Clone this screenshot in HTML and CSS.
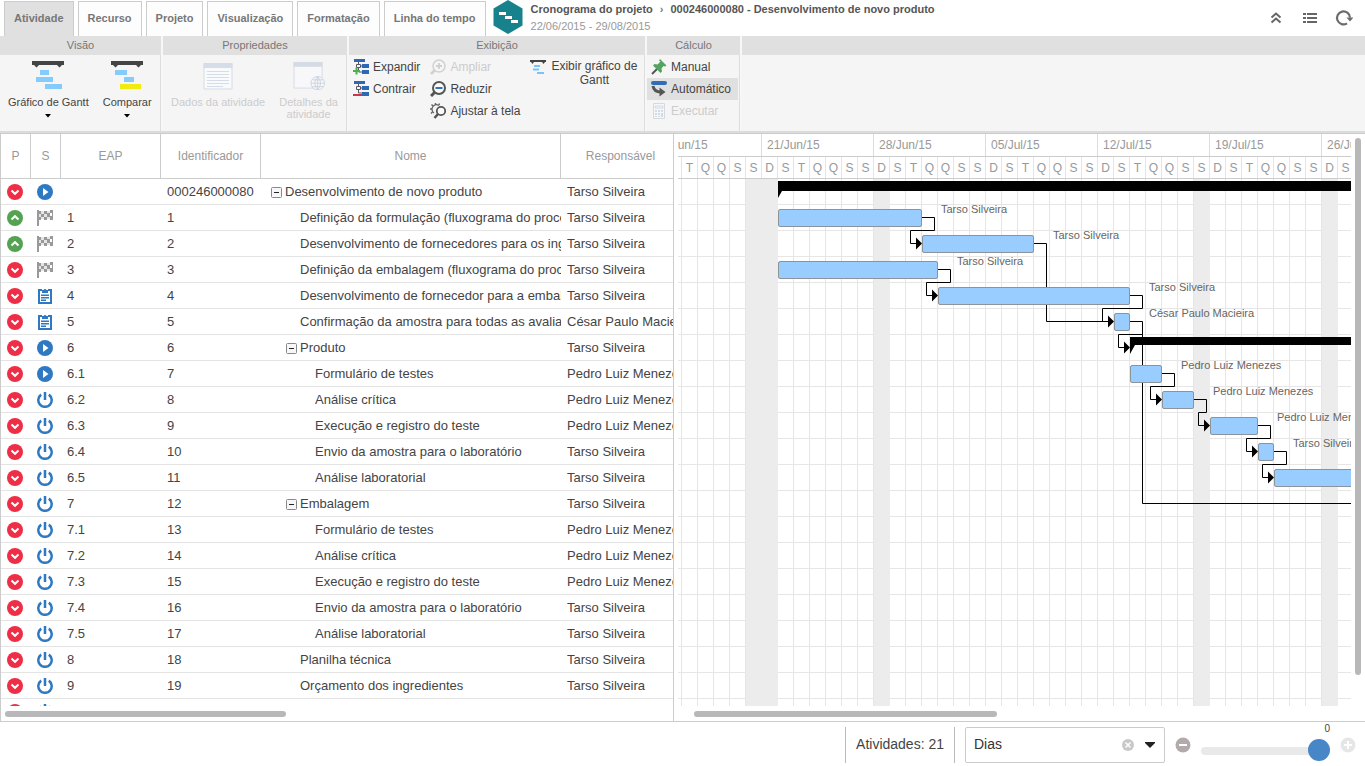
FILE: index.html
```html
<!DOCTYPE html>
<html lang="pt-BR">
<head>
<meta charset="utf-8">
<title>Cronograma do projeto</title>
<link rel="stylesheet" href="styles.css">
</head>
<body>
<svg class="sprite" aria-hidden="true">
  <symbol id="down" viewBox="0 0 16 16"><circle cx="8" cy="8" r="8" fill="#ee2e46"/><path d="M4.500 6.500 8 9.800l3.500-3.300" fill="none" stroke="#fff" stroke-width="2"/></symbol>
  <symbol id="up" viewBox="0 0 16 16"><circle cx="8" cy="8" r="8" fill="#55a352"/><path d="M4.500 9.500 8 6.200l3.500 3.300" fill="none" stroke="#fff" stroke-width="2"/></symbol>
  <symbol id="play" viewBox="0 0 16 16"><circle cx="8" cy="8" r="8" fill="#2f79c3"/><path d="M6 4v8L11.500 8z" fill="#fff"/></symbol>
  <symbol id="power" viewBox="0 0 16 16"><path d="M4.200 2.600a6.700 6.700 0 1 0 7.600 0M8 0v8" fill="none" stroke="#2f79c3" stroke-width="2.500"/></symbol>
  <symbol id="flag" viewBox="0 0 17 16"><path d="M0 0h2v16H0zM2 1h2v3H2zM7 1h3v3H7zM13 0h3v3h-3zM4 4h3v3H4zM10 3h3v4h-3zM15 3h1v3h-1zM2 7h2v3H2zM7 7h3v3H7zM13 6h3v4h-3z" fill="#999"/><path d="M4 1h3v3H4zM10 1h3v2h-3zM2 4h2v3H2zM7 4h3v3H7zM4 7h3v2H4zM10 7h3v2h-3z" fill="#999" opacity=".25"/></symbol>
  <symbol id="clip" viewBox="0 0 16 16"><path d="M1 1h4v2H3v11h10V3h-2V1h4v15H1zM5 2h1.500a1.600 1.600 0 0 1 3 0H11v3H5zM4 6.500h8V8H4zM4 9h8v1.500H4zM4 11.500h5V13H4z" fill="#2f79c3"/></symbol>
  <symbol id="minus" viewBox="0 0 11 11"><rect x=".5" y=".5" width="10" height="10" rx="1" fill="#f7f7f7" stroke="#888"/><path d="M3 5.500h5" stroke="#222"/></symbol>
  <symbol id="caret" viewBox="0 0 6 4"><path d="M0 0h6L3 3.500z" fill="#000"/></symbol>
</svg>

<header class="topbar">
  <nav class="tabs">
    <button class="tab tab-active">Atividade</button>
    <button class="tab">Recurso</button>
    <button class="tab">Projeto</button>
    <button class="tab">Visualização</button>
    <button class="tab">Formatação</button>
    <button class="tab">Linha do tempo</button>
  </nav>
  <svg class="hex" viewBox="0 0 30 34"><path d="M15 0 29.500 8.500v17L15 34 .5 25.500v-17z" fill="#18828c"/><path d="M6 12h7v3H6zM12 16h7v3h-7zM18 20h7v3h-7z" fill="#fff"/></svg>
  <div class="title">
    <h1><span>Cronograma do projeto</span><i>›</i><span>000246000080 - Desenvolvimento de novo produto</span></h1>
    <p>22/06/2015 - 29/08/2015</p>
  </div>
  <div class="tools">
    <button aria-label="Recolher"><svg width="18" height="18" viewBox="0 0 18 18"><path d="M4.500 8.500 9 4.500l4.500 4M4.500 13.500 9 9.500l4.500 4" fill="none" stroke="#666" stroke-width="2"/></svg></button>
    <button aria-label="Lista"><svg width="18" height="18" viewBox="0 0 18 18"><path d="M2 4h3v2H2zM6 4h10v2H6zM2 8h3v2H2zM6 8h10v2H6zM2 12h3v2H2zM6 12h10v2H6z" fill="#666"/></svg></button>
    <button aria-label="Atualizar"><svg width="18" height="18" viewBox="0 0 18 18"><path d="M12 14.400A6.500 6.500 0 1 1 15 8.500" fill="none" stroke="#6b6b6b" stroke-width="2.200"/><path d="M11.500 8.500h7L15 12.500z" fill="#6b6b6b"/></svg></button>
  </div>
</header>

<section class="ribbon">
  <div class="group g-view">
    <h2>Visão</h2>
    <div class="group-body">
      <button class="big"><svg width="32" height="29" viewBox="0 0 32 29"><path d="M0 0h32v4h-2l-2.500 2.500L25 4H7L4.500 6.500 2 4H0z" fill="#444"/><path d="M8 9h9v5H8zM4 16h17v5H4zM13 23h17v5H13z" fill="#85cbfc"/></svg><span>Gráfico de Gantt</span><svg class="drop"><use href="#caret"/></svg></button>
      <button class="big"><svg width="32" height="29" viewBox="0 0 32 29"><path d="M0 0h32v4h-2l-2.500 2.500L25 4H7L4.500 6.500 2 4H0z" fill="#444"/><path d="M4 9h12v5H4zM13 16h10v5H13z" fill="#85cbfc"/><path d="M9 23h21v5H9z" fill="#f0ec12"/></svg><span>Comparar</span><svg class="drop"><use href="#caret"/></svg></button>
    </div>
  </div>
  <div class="group g-prop">
    <h2>Propriedades</h2>
    <div class="group-body">
      <button class="big" disabled><svg width="32" height="29" viewBox="0 0 32 29"><path d="M2 3h28v25H2z" fill="#f8fafc" stroke="#d5dde8"/><path d="M1.500 2h29v5h-29z" fill="#d5dde8"/><path d="M5 10.500h22M5 13.500h22M5 16.500h22M5 19.500h22M5 22.500h22M5 25.500h16" stroke="#d5dde8"/></svg><span>Dados da atividade</span></button>
      <button class="big" disabled><svg width="32" height="29" viewBox="0 0 32 30"><path d="M.5 2h29v26H.5z" fill="#f8f8fb" stroke="#d5dbe4"/><path d="M0 1h30v5H0z" fill="#d5dbe4"/><circle cx="25" cy="23" r="7" fill="#f8f8f8" stroke="#ccd5df"/><path d="M25 16v14M18 23h14M19.500 19.500h11M19.500 26.500h11M25 16q-6 7 0 14 6-7 0-14" fill="none" stroke="#ccd5df"/></svg><span>Detalhes da<br>atividade</span></button>
    </div>
  </div>
  <div class="group g-show">
    <h2>Exibição</h2>
    <div class="group-body">
      <div class="stack">
        <button class="small"><svg class="ico" viewBox="0 0 16 16"><path d="M1 0h11v3H1zM9 5h7v4H9zM9 11h7v4H9z" fill="#2d68b4"/><path d="M5.500 3v2M5.500 9v4H9M3.500 5.500h4v3h-4zM8 7h1" fill="none" stroke="#556"/><path d="M0 12h7M3.500 8.500v7" stroke="#4cae4c" stroke-width="2"/></svg>Expandir</button>
        <button class="small"><svg class="ico" viewBox="0 0 16 16"><path d="M1 0h11v3H1zM9 5h7v4H9zM9 11h7v4H9z" fill="#2d68b4"/><path d="M5.500 3v2M5.500 9v3H9M3.500 5.500h4v3h-4zM8 7h1" fill="none" stroke="#556"/><path d="M0 14h9" stroke="#c8374a" stroke-width="2"/></svg>Contrair</button>
      </div>
      <div class="stack">
        <button class="small" disabled><svg class="ico" viewBox="0 0 16 16"><circle cx="9" cy="7" r="6" fill="none" stroke="#d0d0d0" stroke-width="1.500"/><path d="M5 11l-4 4" stroke="#d0d0d0" stroke-width="2.500"/><path d="M6 7h6M9 4v6" stroke="#d0d0d0" stroke-width="1.800"/></svg>Ampliar</button>
        <button class="small"><svg class="ico" viewBox="0 0 16 16"><circle cx="9" cy="7" r="6" fill="#fafafa" stroke="#555" stroke-width="2"/><path d="M5 11l-4 4" stroke="#555" stroke-width="3"/><path d="M5.500 7h7" stroke="#2d73b5" stroke-width="2"/></svg>Reduzir</button>
        <button class="small"><svg class="ico" viewBox="0 0 16 16"><circle cx="11" cy="8" r="4.200" fill="#fafafa" stroke="#555" stroke-width="1.800"/><path d="M8 11l-3.500 4" stroke="#555" stroke-width="2.500"/><path d="M9 2.500A4.500 4.500 0 1 0 4 10" fill="none" stroke="#666" stroke-width="1.300"/><path d="M5.500 0v2M1.500 1.500 3 3M0 6h2M1 10.500 2.500 9M9.500.500 9 2" stroke="#666" stroke-width="1.500"/></svg>Ajustar à tela</button>
      </div>
      <div class="stack">
        <button class="small two-line"><svg class="ico" viewBox="0 0 16 16"><path d="M0 1h16v2h-1l-1.500 2L12 3H4L2.500 5 1 3H0z" fill="#444"/><path d="M4 6h6v2H4zM3 9.500h6v2H3zM7 13h7v2H7z" fill="#78c4fa"/></svg><span>Exibir gráfico de<br>Gantt</span></button>
      </div>
    </div>
  </div>
  <div class="group g-calc">
    <h2>Cálculo</h2>
    <div class="group-body">
      <div class="stack">
        <button class="small"><svg class="ico" viewBox="0 0 16 16"><path d="M6 10 1 15" stroke="#555" stroke-width="2"/><path d="M9 0l6.500 6.500-1.500 1-1.500-.500L10.500 9.500l.500 3L9.500 14 2 6.500 3.500 5l3 .500 3-3L8 1.500z" fill="#55a35e"/></svg>Manual</button>
        <button class="small pressed"><svg class="ico" viewBox="0 0 16 16"><rect x="0" y="0" width="16" height="4" rx="2" fill="#2f6db8"/><path d="M2 5q1 6 8 6" fill="none" stroke="#555" stroke-width="3"/><path d="M8.500 6.500l6 4.500-6 4.500z" fill="#555"/></svg>Automático</button>
        <button class="small" disabled><svg class="ico" viewBox="0 0 16 16"><path d="M2.500.500h11v15h-11zM4 3h8v2H4z" fill="#f5f7fa" stroke="#d3dae2"/><path d="M4 7h2v2H4zM7 7h2v2H7zM10 7h2v2h-2zM4 10h2v2H4zM7 10h2v2H7zM10 10h2v4h-2zM4 13h2v1H4zM7 13h2v1H7z" fill="#d3dae2"/></svg>Executar</button>
      </div>
    </div>
  </div>
  <div class="group g-rest"><h2></h2><div class="group-body"></div></div>
</section>

<main class="work">
  <section class="tasks">
    <div class="clip">
      <table>
        <colgroup><col class="c-ico"><col class="c-ico"><col class="c-num"><col class="c-num"><col class="c-name"><col class="c-resp"></colgroup>
        <thead><tr><th>P</th><th>S</th><th>EAP</th><th>Identificador</th><th>Nome</th><th>Responsável</th></tr></thead>
        <tbody>
          <tr><td><svg class="st"><use href="#down"/></svg></td><td><svg class="st"><use href="#play"/></svg></td><td></td><td>000246000080</td><td class="p0"><button class="tog" aria-label="Recolher"><svg width="11" height="11"><use href="#minus"/></svg></button>Desenvolvimento de novo produto</td><td>Tarso Silveira</td></tr>
          <tr><td><svg class="st"><use href="#up"/></svg></td><td><svg class="st flag"><use href="#flag"/></svg></td><td>1</td><td>1</td><td class="l1">Definição da formulação (fluxograma do processo)</td><td>Tarso Silveira</td></tr>
          <tr><td><svg class="st"><use href="#up"/></svg></td><td><svg class="st flag"><use href="#flag"/></svg></td><td>2</td><td>2</td><td class="l1">Desenvolvimento de fornecedores para os ingredientes</td><td>Tarso Silveira</td></tr>
          <tr><td><svg class="st"><use href="#down"/></svg></td><td><svg class="st flag"><use href="#flag"/></svg></td><td>3</td><td>3</td><td class="l1">Definição da embalagem (fluxograma do processo)</td><td>Tarso Silveira</td></tr>
          <tr><td><svg class="st"><use href="#down"/></svg></td><td><svg class="st"><use href="#clip"/></svg></td><td>4</td><td>4</td><td class="l1">Desenvolvimento de fornecedor para a embalagem</td><td>Tarso Silveira</td></tr>
          <tr><td><svg class="st"><use href="#down"/></svg></td><td><svg class="st"><use href="#clip"/></svg></td><td>5</td><td>5</td><td class="l1">Confirmação da amostra para todas as avaliações</td><td>César Paulo Macieira</td></tr>
          <tr><td><svg class="st"><use href="#down"/></svg></td><td><svg class="st"><use href="#play"/></svg></td><td>6</td><td>6</td><td class="p1"><button class="tog" aria-label="Recolher"><svg width="11" height="11"><use href="#minus"/></svg></button>Produto</td><td>Tarso Silveira</td></tr>
          <tr><td><svg class="st"><use href="#down"/></svg></td><td><svg class="st"><use href="#play"/></svg></td><td>6.1</td><td>7</td><td class="l2">Formulário de testes</td><td>Pedro Luiz Menezes</td></tr>
          <tr><td><svg class="st"><use href="#down"/></svg></td><td><svg class="st"><use href="#power"/></svg></td><td>6.2</td><td>8</td><td class="l2">Análise crítica</td><td>Pedro Luiz Menezes</td></tr>
          <tr><td><svg class="st"><use href="#down"/></svg></td><td><svg class="st"><use href="#power"/></svg></td><td>6.3</td><td>9</td><td class="l2">Execução e registro do teste</td><td>Pedro Luiz Menezes</td></tr>
          <tr><td><svg class="st"><use href="#down"/></svg></td><td><svg class="st"><use href="#power"/></svg></td><td>6.4</td><td>10</td><td class="l2">Envio da amostra para o laboratório</td><td>Tarso Silveira</td></tr>
          <tr><td><svg class="st"><use href="#down"/></svg></td><td><svg class="st"><use href="#power"/></svg></td><td>6.5</td><td>11</td><td class="l2">Análise laboratorial</td><td>Tarso Silveira</td></tr>
          <tr><td><svg class="st"><use href="#down"/></svg></td><td><svg class="st"><use href="#power"/></svg></td><td>7</td><td>12</td><td class="p1"><button class="tog" aria-label="Recolher"><svg width="11" height="11"><use href="#minus"/></svg></button>Embalagem</td><td>Tarso Silveira</td></tr>
          <tr><td><svg class="st"><use href="#down"/></svg></td><td><svg class="st"><use href="#power"/></svg></td><td>7.1</td><td>13</td><td class="l2">Formulário de testes</td><td>Pedro Luiz Menezes</td></tr>
          <tr><td><svg class="st"><use href="#down"/></svg></td><td><svg class="st"><use href="#power"/></svg></td><td>7.2</td><td>14</td><td class="l2">Análise crítica</td><td>Pedro Luiz Menezes</td></tr>
          <tr><td><svg class="st"><use href="#down"/></svg></td><td><svg class="st"><use href="#power"/></svg></td><td>7.3</td><td>15</td><td class="l2">Execução e registro do teste</td><td>Pedro Luiz Menezes</td></tr>
          <tr><td><svg class="st"><use href="#down"/></svg></td><td><svg class="st"><use href="#power"/></svg></td><td>7.4</td><td>16</td><td class="l2">Envio da amostra para o laboratório</td><td>Tarso Silveira</td></tr>
          <tr><td><svg class="st"><use href="#down"/></svg></td><td><svg class="st"><use href="#power"/></svg></td><td>7.5</td><td>17</td><td class="l2">Análise laboratorial</td><td>Tarso Silveira</td></tr>
          <tr><td><svg class="st"><use href="#down"/></svg></td><td><svg class="st"><use href="#power"/></svg></td><td>8</td><td>18</td><td class="l1">Planilha técnica</td><td>Tarso Silveira</td></tr>
          <tr><td><svg class="st"><use href="#down"/></svg></td><td><svg class="st"><use href="#power"/></svg></td><td>9</td><td>19</td><td class="l1">Orçamento dos ingredientes</td><td>Tarso Silveira</td></tr>
          <tr><td><svg class="st"><use href="#down"/></svg></td><td><svg class="st"><use href="#power"/></svg></td><td></td><td></td><td></td><td></td></tr>
        </tbody>
      </table>
    </div>
    <div class="hscroll"><div class="thumb thumb-tasks"></div></div>
  </section>

  <section class="gantt">
    <div class="clip">
      <div class="weeks"><span>14/Jun/15</span><span>21/Jun/15</span><span>28/Jun/15</span><span>05/Jul/15</span><span>12/Jul/15</span><span>19/Jul/15</span><span>26/Jul/15</span></div>
      <div class="days">
        <span>D</span><span>S</span><span>T</span><span>Q</span><span>Q</span><span>S</span><span>S</span>
        <span>D</span><span>S</span><span>T</span><span>Q</span><span>Q</span><span>S</span><span>S</span>
        <span>D</span><span>S</span><span>T</span><span>Q</span><span>Q</span><span>S</span><span>S</span>
        <span>D</span><span>S</span><span>T</span><span>Q</span><span>Q</span><span>S</span><span>S</span>
        <span>D</span><span>S</span><span>T</span><span>Q</span><span>Q</span><span>S</span><span>S</span>
        <span>D</span><span>S</span><span>T</span><span>Q</span><span>Q</span><span>S</span><span>S</span>
        <span>D</span><span>S</span>
      </div>
      <div class="chart">
        <div class="off" style="left:68px;width:32px"></div>
        <div class="off" style="left:196px;width:16px"></div>
        <div class="off" style="left:516px;width:16px"></div>
        <div class="off" style="left:644px;width:16px"></div>
        <svg class="links">
          <g fill="none" stroke="#000">
            <path d="M244 38.500h12.500v13h-24v13H240"/>
            <path d="M260 90.500h12.500v13h-24v13H256"/>
            <path d="M356 64.500h12.500v78H432"/>
            <path d="M452 116.500h12.500v13h-40v13"/>
            <path d="M452 142.500h12.500v13h-24v13H448M464.500 155.500v169H2000"/>
            <path d="M484 194.500h12.500v13h-24v13H480"/>
            <path d="M516 220.500h12.500v13h-8v13H528"/>
            <path d="M580 246.500h12.500v13h-24v13H576"/>
            <path d="M596 272.500h12.500v13h-24v13H592"/>
          </g>
          <path d="M238 58.500l6 6-6 6zM254 110.500l6 6-6 6zM430 136.500l6 6-6 6zM446 162.500l6 6-6 6zM478 214.500l6 6-6 6zM526 240.500l6 6-6 6zM574 266.500l6 6-6 6zM590 292.500l6 6-6 6z"/>
          <path d="M100 2h2000v10H104l-4 7zM452 158h2000v8H457l-5 9z"/>
        </svg>
        <div class="bar" style="left:100px;top:30px;width:144px"></div>
        <div class="bar" style="left:244px;top:56px;width:112px"></div>
        <div class="bar" style="left:100px;top:82px;width:160px"></div>
        <div class="bar" style="left:260px;top:108px;width:192px"></div>
        <div class="bar" style="left:436px;top:134px;width:16px"></div>
        <div class="bar" style="left:452px;top:186px;width:32px"></div>
        <div class="bar" style="left:484px;top:212px;width:32px"></div>
        <div class="bar" style="left:532px;top:238px;width:48px"></div>
        <div class="bar" style="left:580px;top:264px;width:16px"></div>
        <div class="bar" style="left:596px;top:290px;width:112px"></div>
        <span class="who" style="left:263px;top:24px">Tarso Silveira</span>
        <span class="who" style="left:375px;top:50px">Tarso Silveira</span>
        <span class="who" style="left:279px;top:76px">Tarso Silveira</span>
        <span class="who" style="left:471px;top:102px">Tarso Silveira</span>
        <span class="who" style="left:471px;top:128px">César Paulo Macieira</span>
        <span class="who" style="left:503px;top:180px">Pedro Luiz Menezes</span>
        <span class="who" style="left:535px;top:206px">Pedro Luiz Menezes</span>
        <span class="who" style="left:599px;top:232px">Pedro Luiz Menezes</span>
        <span class="who" style="left:615px;top:258px">Tarso Silveira</span>
      </div>
    </div>
    <div class="hscroll"><div class="thumb thumb-gantt"></div></div>
  </section>
  <div class="vscroll"><div class="vthumb"></div></div>
</main>

<footer class="status">
  <div class="count">Atividades: 21</div>
  <div class="scale">
    <select aria-label="Escala"><option>Dias</option></select>
    <button class="clear" aria-label="Limpar"><svg width="12" height="12" viewBox="0 0 12 12"><circle cx="6" cy="6" r="6" fill="#c8c8c8"/><path d="M3.500 3.500l5 5M8.500 3.500l-5 5" stroke="#fff" stroke-width="1.500"/></svg></button>
    <svg class="arrow" viewBox="0 0 10 6"><path d="M0 0h10v1L5 6 0 1z" fill="#222"/></svg>
  </div>
  <button class="round" aria-label="Diminuir"><svg width="16" height="16" viewBox="0 0 16 16"><circle cx="8" cy="8" r="7.500" fill="#b3abab"/><path d="M4 8h8" stroke="#fff" stroke-width="2"/></svg></button>
  <div class="zoom">
    <output for="zoom">0</output>
    <input id="zoom" type="range" min="-10" max="0" value="0" aria-label="Zoom">
  </div>
  <button class="round" aria-label="Aumentar" disabled><svg width="16" height="16" viewBox="0 0 16 16"><circle cx="8" cy="8" r="7.500" fill="#e6e6e6"/><path d="M4 8h8M8 4v8" stroke="#fff" stroke-width="2"/></svg></button>
</footer>
</body>
</html>
```
FILE: styles.css
```css
* { box-sizing: border-box; }
body {
  margin: 0;
  height: 100vh;
  display: flex;
  flex-direction: column;
  overflow: hidden;
  background: #fff;
  color: #444;
  font-family: "Liberation Sans", Arial, sans-serif;
  font-size: 12px;
}
button {
  margin: 0;
  padding: 0;
  border: 0;
  background: none;
  color: inherit;
  font: inherit;
}
svg { display: block; flex: none; }
h1, h2, p { margin: 0; }
.sprite { position: absolute; width: 0; height: 0; }

.topbar { display: flex; flex: none; height: 36px; }
.tabs { display: flex; gap: 4px; padding: 1px 0 0 4px; }
.tab {
  padding: 0 9px 3px;
  border: 1px solid #ccc;
  border-bottom: 0;
  background: #fdfdfd;
  color: #777;
  font-size: 11px;
  font-weight: bold;
}
.tab-active { background: #e0e0e0; }
.hex { width: 30px; height: 34px; margin: 0 8px 0 7px; }
.title { flex: 1; padding-top: 1px; font-size: 11px; line-height: 17px; }
.title h1 { display: flex; gap: 7px; font-size: 11px; color: #555; }
.title i { font-style: normal; color: #777; }
.title p { color: #999; }
.tools { display: flex; align-items: center; gap: 16px; padding-right: 12px; }

.ribbon {
  display: flex;
  flex: none;
  height: 97px;
  gap: 2px;
  background: #f7f7f7;
  border-bottom: 2px solid #dcdcdc;
}
.group { display: flex; flex-direction: column; }
.group h2 {
  height: 19px;
  background: #e0e0e0;
  color: #777;
  font-size: 11px;
  font-weight: normal;
  line-height: 18px;
  text-align: center;
}
.group-body { display: flex; flex: 1; border-right: 1px solid #ddd; background: #f5f5f5; }
.g-view { width: 161px; }
.g-prop { width: 184px; }
.g-show { width: 296px; }
.g-calc { width: 93px; }
.g-rest { flex: 1; }
.g-rest .group-body { border: 0; }
.g-view .group-body, .g-prop .group-body { gap: 14px; padding-left: 8px; }
.big {
  display: flex;
  flex-direction: column;
  align-items: center;
  align-self: flex-start;
  padding-top: 6px;
  font-size: 11px;
  line-height: 12px;
}
.big span { margin-top: 6px; }
.drop { width: 6px; height: 4px; margin-top: 6px; }
button:disabled { color: #ccc; }
.g-show .group-body { gap: 10px; padding-left: 4px; }
.stack { display: flex; flex-direction: column; padding-top: 1px; }
.small { display: flex; align-items: center; gap: 4px; height: 22px; }
.small .ico { width: 16px; height: 16px; }
.two-line { height: 36px; align-items: flex-start; gap: 5px; padding-top: 3px; line-height: 14px; }
.g-calc .stack { flex: 1; padding: 1px 1px 0 0; }
.g-calc .small { padding-left: 4px; }
.pressed { background: #e0e0e0; }

.work {
  display: flex;
  flex: 1;
  min-height: 0;
  border-top: 1px solid #ccc;
  border-bottom: 1px solid #ccc;
}
.tasks {
  display: flex;
  flex: none;
  flex-direction: column;
  width: 674px;
  border-left: 1px solid #ccc;
  border-right: 1px solid #ccc;
}
.clip { flex: 1; min-height: 0; overflow: hidden; }
table { width: 680px; table-layout: fixed; border-collapse: separate; border-spacing: 0; }
.c-ico { width: 30px; }
.c-num { width: 100px; }
.c-name { width: 300px; }
.c-resp { width: 120px; }
th {
  height: 45px;
  padding: 0;
  border-right: 1px solid #ccc;
  border-bottom: 1px solid #ccc;
  color: #999;
  font-weight: normal;
  text-align: center;
}
td {
  height: 26px;
  padding: 0 0 0 6px;
  border-bottom: 1px solid #e4e4e4;
  font-size: 13px;
  line-height: 15px;
  white-space: nowrap;
  overflow: hidden;
}
.st { width: 16px; height: 16px; }
.flag { width: 17px; }
.p0 { padding-left: 10px; }
.p1 { padding-left: 25px; }
.l1 { padding-left: 39px; }
.l2 { padding-left: 54px; }
.tog { margin-right: 3px; vertical-align: -2px; }
.hscroll { flex: none; height: 15px; padding-top: 5px; }
.thumb { height: 6px; border-radius: 3px; background: #b8b8b8; }
.thumb-tasks { width: 281px; margin-left: 4px; }
.thumb-gantt { width: 303px; margin-left: 16px; }

.gantt { display: flex; flex: 1; flex-direction: column; min-width: 0; padding-left: 4px; }
.gantt .clip { display: flex; flex-direction: column; }
.weeks, .days { display: flex; flex: none; margin-left: -29px; border-bottom: 1px solid #ccc; color: #999; }
.weeks { height: 23px; }
.weeks span { flex: none; width: 112px; padding-left: 5px; border-left: 1px solid #ddd; line-height: 22px; }
.days { height: 22px; }
.days span { flex: none; width: 16px; border-left: 1px solid #e4e4e4; line-height: 22px; text-align: center; }
.chart {
  position: relative;
  flex: 1;
  overflow: hidden;
  background-image:
    repeating-linear-gradient(to right, transparent 0 3px, #e6e6e6 3px 4px, transparent 4px 16px),
    repeating-linear-gradient(to bottom, transparent 0 25px, #e6e6e6 25px 26px);
}
.off { position: absolute; top: 0; bottom: 0; background: #ececec; }
.links { position: absolute; left: 0; top: 0; width: 100%; height: 100%; }
.bar { position: absolute; height: 18px; border: 1px solid #8b939b; border-radius: 2px; background: #99ccff; }
.who { position: absolute; color: #666; font-size: 11px; line-height: 13px; white-space: nowrap; }
.vscroll { display: flex; flex: none; width: 14px; padding: 4px 4px 46px; }
.vthumb { flex: 1; border-radius: 3px; background: #b8b8b8; }

.status { display: flex; flex: none; justify-content: flex-end; align-items: center; height: 44px; padding: 2px 9px 0 0; font-size: 14px; }
.count { height: 36px; padding: 0 10px; border: solid #bbb; border-width: 0 1px; line-height: 34px; }
.scale { position: relative; margin: 0 10px; }
.scale select {
  width: 200px;
  height: 36px;
  padding: 0 8px 2px;
  border: 1px solid #ccc;
  border-radius: 2px;
  appearance: none;
  background: #fff;
  color: #333;
  font: inherit;
}
.clear { position: absolute; right: 31px; top: 12px; }
.arrow { position: absolute; right: 10px; top: 15px; width: 10px; height: 6px; }
.round { flex: none; }
.zoom { display: flex; flex-direction: column; width: 129px; height: 44px; margin: 0 10px; }
.zoom output { align-self: flex-end; font-size: 10px; line-height: 12px; }
.zoom input { width: 100%; height: 22px; margin: 5px 0 0; appearance: none; background: none; }
.zoom input::-webkit-slider-runnable-track { height: 8px; border-radius: 4px; background: #e9e9e9; }
.zoom input::-webkit-slider-thumb { appearance: none; width: 22px; height: 22px; margin-top: -8px; border-radius: 50%; background: #4787c7; }
```
